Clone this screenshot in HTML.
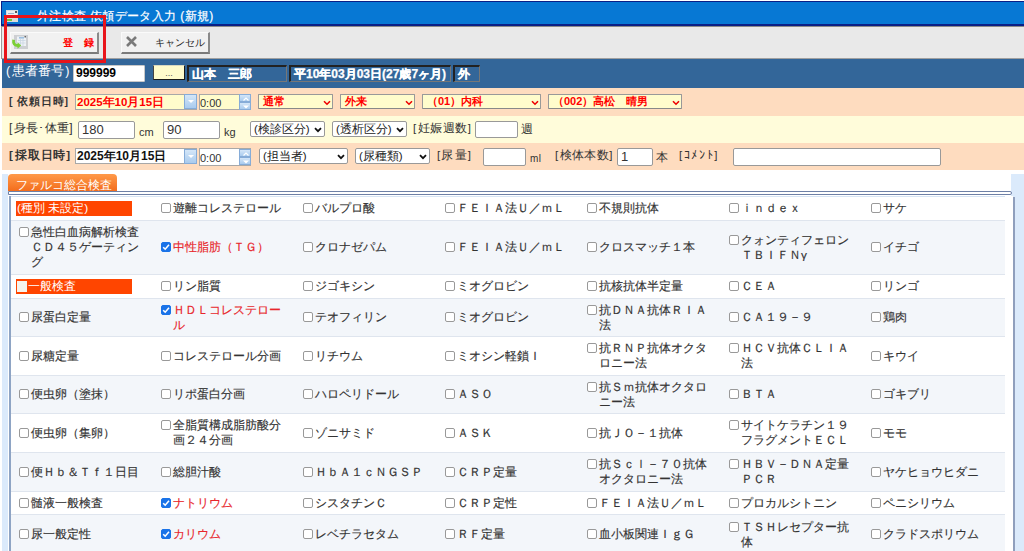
<!DOCTYPE html>
<html><head><meta charset="utf-8">
<style>
*{box-sizing:border-box}
html,body{margin:0;padding:0;width:1024px;height:551px;overflow:hidden;background:#fff;font-family:"Liberation Sans",sans-serif;color:#333}
.abs{position:absolute}
#title{left:1px;top:1px;width:1023px;height:25px;background:#0778d4;border:1px solid #0a1f86;border-right:none;border-bottom-width:2px}
#titletxt{left:37px;top:9px;font-size:12px;-webkit-text-stroke:0.2px #fff;line-height:15px;color:#fff;white-space:nowrap;letter-spacing:0.35px}
#toolbar{left:1px;top:26px;width:1023px;height:33px;background:#e9e9e9;border-left:1px solid #9a9a9a;border-top:1px solid #8a8a8a;border-bottom:1px solid #a0a0a0}
.btn{height:22px;top:32px;background:#f1f1f1;border:1px solid #fafafa;border-right:2px solid #8a8a8a;border-bottom:2px solid #7a7a7a}
#pt{left:2px;top:59px;width:1022px;height:29px;background:#336699}
.pbox{height:17px;border:1px solid #222;border-top-width:2px;border-left-width:2px;border-right-color:#777;border-bottom-color:#777;color:#fff;font-weight:bold;font-size:12px;line-height:14px;white-space:nowrap;overflow:hidden;-webkit-text-stroke:0.25px #fff}
#r1{left:2px;top:88px;width:1022px;height:28px;background:#fedcbf}
#r2{left:2px;top:116px;width:1022px;height:27px;background:#fffcda}
#r3{left:2px;top:143px;width:1022px;height:27px;background:#fedcbf}
.lbl{font-size:13px;white-space:nowrap}
.inp{background:#fff;border:1px solid #999;border-radius:2px;font-size:13px;padding-left:3px;white-space:nowrap;overflow:hidden}
.sel{background:#fffccc;border:1px solid #999;border-bottom-color:#888;border-radius:1px;font-size:11px;line-height:13px;padding-left:4px;white-space:nowrap;color:#f00;font-weight:bold}
.sel2{background:#fff;border:1px solid #999;border-radius:2px;font-size:11.5px;line-height:14px;padding-left:3px;white-space:nowrap;color:#222}
.dt{border:1px solid #a8a8a8;font-size:12px;line-height:15px;padding-left:1px;white-space:nowrap;overflow:hidden}
.spin{background:linear-gradient(#d4e6f8,#a9cbee);border:1px solid #86acd8}
#redbox{left:4px;top:15px;width:102px;height:48px;border:3px solid #e8141a}
#leftcol{left:2px;top:174px;width:6px;height:377px;background:#dbeafb}
#rightcol{left:1011px;top:174px;width:13px;height:377px;background:#dbeafb}
#tab{left:8px;top:174px;width:109px;height:17px;background:linear-gradient(#ff9a4a,#f36d1c);border-radius:4px 4px 0 0;color:#fff;font-size:12px;padding-left:8px;line-height:22px;white-space:nowrap;overflow:hidden}
#tabline{left:8px;top:191px;width:1004px;height:4px;border:1px solid #6e80a6;border-radius:0 2px 2px 0;background:#fff}
#panelL{left:9px;top:196px;width:2px;height:355px;background:#8ea4c4}
#panelR{left:1013px;top:197px;width:2px;height:354px;background:#8f9fbd}
#panelW{left:1004px;top:196px;width:9px;height:355px;background:#fff}
#grid{left:11px;top:196px;width:994px;border-collapse:collapse;table-layout:fixed}
#grid td{font-size:11.8px;line-height:14.8px;vertical-align:middle;padding:0 4px 0 4px;border-top:1px solid #dfe5ee;color:#333;-webkit-text-stroke:0.15px #333}
#grid tr:first-child td{border-top:1.5px solid #d6e4f4}
#grid tr:nth-child(even) td{background:#f3f6fa}
.cb{display:flex;align-items:flex-start;max-height:30px;overflow:hidden}
#grid tr:nth-child(2) .cb{max-height:45px}
#grid tr:nth-child(1) .cb,#grid tr:nth-child(3) .cb,#grid tr:nth-child(9) .cb{max-height:16px}
.box{position:relative;flex:none;width:10px;height:10px;border:1.2px solid #999;border-radius:2px;margin:2px 2px 0 4px;background:#fff}
.box.on{background:#1a73e8;border-color:#1a73e8}
.box.on svg{position:absolute;left:0;top:0}
.red{color:#e8262b;-webkit-text-stroke:0.15px #e8262b}
.org{background:#ff4500;color:#fff;height:15px;line-height:15px;padding-left:1px;width:116px;margin-left:1px;white-space:nowrap;-webkit-text-stroke:0}
.wsq{display:inline-block;width:10px;height:11px;background:#f4f4ee;vertical-align:-2px;margin-right:1px}
</style></head><body>
<div id="title" class="abs"></div>
<svg class="abs" style="left:6px;top:10px" width="12" height="12" viewBox="0 0 12 12">
<rect x="0" y="0" width="12" height="12" fill="#d9dadc"/>
<rect x="1" y="1" width="10" height="4" fill="#eceef0"/>
<path d="M2 3.5 H8" stroke="#9bb4d0" stroke-width="1"/>
<rect x="9" y="1" width="2" height="2" fill="#555"/>
<rect x="1" y="9" width="5" height="2" fill="#74c43a"/>
</svg>
<div id="titletxt" class="abs">外注検査 依頼データ入力 (新規)</div>
<div id="toolbar" class="abs"></div>
<div class="abs btn" style="left:10px;width:89px"></div>
<svg class="abs" style="left:11px;top:34px" width="18" height="16" viewBox="0 0 18 16">
<rect x="3" y="1" width="14" height="14" fill="#cdcfd2"/>
<rect x="6" y="2.5" width="9" height="9.5" fill="#eef2f6"/>
<rect x="8" y="3" width="5" height="1.6" fill="#9ec0e0"/>
<rect x="13.5" y="2" width="1.5" height="1.5" fill="#666"/>
<path d="M7 6.5 H14.5 M7 9 H14.5 M9.5 5 V12 M12 5 V12" stroke="#c5d3e0" stroke-width="0.7"/>
<path d="M2.6 5.8 Q1.8 11.5 7 11.5" stroke="#7ccf35" stroke-width="2.8" fill="none"/>
<path d="M6.5 8.2 L10.2 11.6 L6.5 14.8 Z" fill="#7ccf35"/>
</svg>
<div class="abs" style="left:63px;top:37px;font-size:10px;line-height:12px;color:#f00;font-weight:bold;white-space:nowrap">登<span style="display:inline-block;width:10.5px"></span>録</div>
<div class="abs btn" style="left:121px;width:89px"></div>
<svg class="abs" style="left:125px;top:35px" width="13" height="13" viewBox="0 0 13 13"><path d="M2 2 L11 11 M11 2 L2 11" stroke="#7a7a7a" stroke-width="2.6" stroke-linecap="butt"/></svg>
<div class="abs" style="left:155px;top:37px;font-size:10px;line-height:12px;color:#222;white-space:nowrap">キャンセル</div>

<div id="pt" class="abs"></div>
<div class="abs lbl" style="left:6px;top:64px;color:#fff;font-size:12.5px;line-height:15px">(<span style="margin-left:2px"></span>患者番号<span style="margin-left:1px"></span>)</div>
<div class="abs" style="left:73px;top:65px;width:72px;height:17px;background:#fff;border:1px solid #c8c8c8;border-radius:1px;font-weight:bold;font-size:12px;color:#000;line-height:15px;padding-left:2px">999999</div>
<div class="abs" style="left:153px;top:65px;width:32px;height:15px;background:#fffccc;border:1px solid #1a1a1a;border-top-color:#d8d8c0;border-left-color:#444;font-size:9px;text-align:center;line-height:14px;color:#555">...</div>
<div class="abs pbox" style="left:187px;top:65px;width:100px;padding-left:3px">山本　三郎</div>
<div class="abs pbox" style="left:289px;top:65px;width:162px;padding-left:3px">平10年03月03日(27歳7ヶ月)</div>
<div class="abs pbox" style="left:453px;top:65px;width:27px;padding-left:3px">外</div>

<div id="r1" class="abs"></div>
<div class="abs lbl" style="left:9px;top:94px;font-weight:bold;color:#333;font-size:10.5px;letter-spacing:1px;line-height:15px">[<span style="margin-left:3px"></span>依頼日時]</div>
<div class="abs dt" style="left:75px;top:94px;width:122px;height:16px;background:#fffccc;color:#f00;font-weight:bold;font-size:11.5px">2025年10月15日</div>
<div class="abs spin" style="left:184px;top:94px;width:13px;height:15px"><svg class="abs" style="left:3px;top:5px" width="6" height="4" viewBox="0 0 6 4"><path d="M0 0 L6 0 L3 3 Z" fill="#fff"/></svg></div>
<div class="abs dt" style="left:199px;top:94px;width:52px;height:16px;background:#fffccc;font-weight:normal;font-size:11px;color:#333;line-height:16px;padding-left:0">0:00</div>
<div class="abs spin" style="left:239px;top:94px;width:12px;height:8px"><svg class="abs" style="left:2.5px;top:2px" width="6" height="4" viewBox="0 0 6 4"><path d="M0.5 3.5 L3 1 L5.5 3.5" stroke="#fff" stroke-width="1.2" fill="none"/></svg></div><div class="abs spin" style="left:239px;top:102px;width:12px;height:8px"><svg class="abs" style="left:2.5px;top:2px" width="6" height="4" viewBox="0 0 6 4"><path d="M0 0.5 L6 0.5 L3 3.5 Z" fill="#fff"/></svg></div>
<div class="abs sel" style="left:258px;top:94px;width:75px;height:15px">通常<svg class="abs" style="right:1.5px;top:4.5px" width="8" height="6" viewBox="0 0 8 6"><path d="M1 1.2 L4 4.2 L7 1.2" stroke="#e00" stroke-width="1.6" fill="none"/></svg></div>
<div class="abs sel" style="left:340px;top:94px;width:75px;height:15px">外来<svg class="abs" style="right:1.5px;top:4.5px" width="8" height="6" viewBox="0 0 8 6"><path d="M1 1.2 L4 4.2 L7 1.2" stroke="#e00" stroke-width="1.6" fill="none"/></svg></div>
<div class="abs sel" style="left:422px;top:94px;width:119px;height:15px">（01）内科<svg class="abs" style="right:1.5px;top:4.5px" width="8" height="6" viewBox="0 0 8 6"><path d="M1 1.2 L4 4.2 L7 1.2" stroke="#e00" stroke-width="1.6" fill="none"/></svg></div>
<div class="abs sel" style="left:548px;top:94px;width:134px;height:15px">（002）高松　晴男<svg class="abs" style="right:1.5px;top:4.5px" width="8" height="6" viewBox="0 0 8 6"><path d="M1 1.2 L4 4.2 L7 1.2" stroke="#e00" stroke-width="1.6" fill="none"/></svg></div>

<div id="r2" class="abs"></div>
<div class="abs lbl" style="left:9px;top:121px;font-size:12px;line-height:15px;color:#333;letter-spacing:0.3px">[<span style="margin-left:1px"></span>身長･体重]</div>
<div class="abs inp" style="left:78px;top:121px;width:57px;height:18px;line-height:16px">180</div>
<div class="abs lbl" style="left:139px;top:125px;font-size:11px;line-height:14px">cm</div>
<div class="abs inp" style="left:163px;top:121px;width:57px;height:18px;line-height:16px">90</div>
<div class="abs lbl" style="left:224px;top:125px;font-size:11px;line-height:14px">kg</div>
<div class="abs sel2" style="left:250px;top:121px;width:75px;height:16px">(検診区分)<svg class="abs" style="right:2px;top:5px" width="8" height="6" viewBox="0 0 8 6"><path d="M1 1.2 L4 4.2 L7 1.2" stroke="#111" stroke-width="1.8" fill="none"/></svg></div>
<div class="abs sel2" style="left:332px;top:121px;width:75px;height:16px">(透析区分)<svg class="abs" style="right:2px;top:5px" width="8" height="6" viewBox="0 0 8 6"><path d="M1 1.2 L4 4.2 L7 1.2" stroke="#111" stroke-width="1.8" fill="none"/></svg></div>
<div class="abs lbl" style="left:413px;top:121px;font-size:11.5px;line-height:15px;letter-spacing:0.5px">[<span style="margin-left:1px"></span>妊娠週数]</div>
<div class="abs inp" style="left:475px;top:121px;width:43px;height:17px"></div>
<div class="abs lbl" style="left:521px;top:122px;font-size:12px;line-height:15px">週</div>

<div id="r3" class="abs"></div>
<div class="abs lbl" style="left:9px;top:148px;font-weight:bold;font-size:11.5px;line-height:15px;color:#333;letter-spacing:0.9px">[<span style="margin-left:1px"></span>採取日時]</div>
<div class="abs dt" style="left:75px;top:148px;width:122px;height:16px;background:#fff;color:#111;font-weight:bold">2025年10月15日</div>
<div class="abs spin" style="left:184px;top:149px;width:13px;height:15px"><svg class="abs" style="left:3px;top:5px" width="6" height="4" viewBox="0 0 6 4"><path d="M0 0 L6 0 L3 3 Z" fill="#fff"/></svg></div>
<div class="abs dt" style="left:199px;top:148px;width:52px;height:18px;background:#fff;font-weight:normal;font-size:11px;color:#333;line-height:19px;padding-left:0">0:00</div>
<div class="abs spin" style="left:239px;top:149px;width:12px;height:8px"><svg class="abs" style="left:2.5px;top:2px" width="6" height="4" viewBox="0 0 6 4"><path d="M0.5 3.5 L3 1 L5.5 3.5" stroke="#fff" stroke-width="1.2" fill="none"/></svg></div><div class="abs spin" style="left:239px;top:157px;width:12px;height:8px"><svg class="abs" style="left:2.5px;top:2px" width="6" height="4" viewBox="0 0 6 4"><path d="M0 0.5 L6 0.5 L3 3.5 Z" fill="#fff"/></svg></div>
<div class="abs sel2" style="left:259px;top:148px;width:89px;height:16px">(担当者)<svg class="abs" style="right:2px;top:5px" width="8" height="6" viewBox="0 0 8 6"><path d="M1 1.2 L4 4.2 L7 1.2" stroke="#111" stroke-width="1.8" fill="none"/></svg></div>
<div class="abs sel2" style="left:355px;top:148px;width:75px;height:16px">(尿種類)<svg class="abs" style="right:2px;top:5px" width="8" height="6" viewBox="0 0 8 6"><path d="M1 1.2 L4 4.2 L7 1.2" stroke="#111" stroke-width="1.8" fill="none"/></svg></div>
<div class="abs lbl" style="left:437px;top:148px;font-size:11.5px;line-height:15px;letter-spacing:1.2px">[尿量]</div>
<div class="abs inp" style="left:483px;top:148px;width:43px;height:18px"></div>
<div class="abs lbl" style="left:530px;top:152px;font-size:10px;line-height:14px;letter-spacing:0.5px">ml</div>
<div class="abs lbl" style="left:555px;top:148px;font-size:11.5px;line-height:15px;letter-spacing:0.4px">[<span style="margin-left:1px"></span>検体本数]</div>
<div class="abs inp" style="left:617px;top:148px;width:36px;height:18px;line-height:16px">1</div>
<div class="abs lbl" style="left:656px;top:149.5px;font-size:12px;line-height:15px">本</div>
<div class="abs lbl" style="left:679px;top:148px;font-size:11.5px;line-height:15px;letter-spacing:1.6px">[ｺﾒﾝﾄ]</div>
<div class="abs inp" style="left:733px;top:148px;width:208px;height:18px"></div>

<div id="redbox" class="abs"></div>

<div id="leftcol" class="abs"></div>
<div id="rightcol" class="abs"></div>
<div id="tab" class="abs">ファルコ総合検査</div>
<div id="tabline" class="abs"></div>
<div id="panelL" class="abs"></div>
<div id="panelW" class="abs"></div>
<div id="panelR" class="abs"></div>

<table id="grid" class="abs">
<colgroup><col><col><col><col><col><col><col></colgroup>
<tr style="height:24px">
<td><div class="org">(種別 未設定)</div></td>
<td><div class="cb"><span class="box"></span><span>遊離コレステロール</span></div></td>
<td><div class="cb"><span class="box"></span><span>バルプロ酸</span></div></td>
<td><div class="cb"><span class="box"></span><span>ＦＥＩＡ法Ｕ／ｍＬ</span></div></td>
<td><div class="cb"><span class="box"></span><span>不規則抗体</span></div></td>
<td><div class="cb"><span class="box"></span><span>ｉｎｄｅｘ</span></div></td>
<td><div class="cb"><span class="box"></span><span>サケ</span></div></td>
</tr>
<tr style="height:54px">
<td><div class="cb"><span class="box"></span><span>急性白血病解析検査ＣＤ４５ゲーティング</span></div></td>
<td><div class="cb"><span class="box on"><svg width="8" height="8" viewBox="0 0 8 8"><path d="M1.2 4.2 L3.2 6.2 L7 1.8" stroke="#fff" stroke-width="1.6" fill="none"/></svg></span><span class="red">中性脂肪（ＴＧ）</span></div></td>
<td><div class="cb"><span class="box"></span><span>クロナゼパム</span></div></td>
<td><div class="cb"><span class="box"></span><span>ＦＥＩＡ法Ｕ／ｍＬ</span></div></td>
<td><div class="cb"><span class="box"></span><span>クロスマッチ１本</span></div></td>
<td><div class="cb"><span class="box"></span><span>クォンティフェロンＴＢＩＦＮγ</span></div></td>
<td><div class="cb"><span class="box"></span><span>イチゴ</span></div></td>
</tr>
<tr style="height:24px">
<td><div class="org"><span class="wsq"></span>一般検査</div></td>
<td><div class="cb"><span class="box"></span><span>リン脂質</span></div></td>
<td><div class="cb"><span class="box"></span><span>ジゴキシン</span></div></td>
<td><div class="cb"><span class="box"></span><span>ミオグロビン</span></div></td>
<td><div class="cb"><span class="box"></span><span>抗核抗体半定量</span></div></td>
<td><div class="cb"><span class="box"></span><span>ＣＥＡ</span></div></td>
<td><div class="cb"><span class="box"></span><span>リンゴ</span></div></td>
</tr>
<tr style="height:38px">
<td><div class="cb"><span class="box"></span><span>尿蛋白定量</span></div></td>
<td><div class="cb"><span class="box on"><svg width="8" height="8" viewBox="0 0 8 8"><path d="M1.2 4.2 L3.2 6.2 L7 1.8" stroke="#fff" stroke-width="1.6" fill="none"/></svg></span><span class="red">ＨＤＬコレステロール</span></div></td>
<td><div class="cb"><span class="box"></span><span>テオフィリン</span></div></td>
<td><div class="cb"><span class="box"></span><span>ミオグロビン</span></div></td>
<td><div class="cb"><span class="box"></span><span>抗ＤＮＡ抗体ＲＩＡ法</span></div></td>
<td><div class="cb"><span class="box"></span><span>ＣＡ１９－９</span></div></td>
<td><div class="cb"><span class="box"></span><span>鶏肉</span></div></td>
</tr>
<tr style="height:39px">
<td><div class="cb"><span class="box"></span><span>尿糖定量</span></div></td>
<td><div class="cb"><span class="box"></span><span>コレステロール分画</span></div></td>
<td><div class="cb"><span class="box"></span><span>リチウム</span></div></td>
<td><div class="cb"><span class="box"></span><span>ミオシン軽鎖Ｉ</span></div></td>
<td><div class="cb"><span class="box"></span><span>抗ＲＮＰ抗体オクタロニー法</span></div></td>
<td><div class="cb"><span class="box"></span><span>ＨＣＶ抗体ＣＬＩＡ法</span></div></td>
<td><div class="cb"><span class="box"></span><span>キウイ</span></div></td>
</tr>
<tr style="height:38px">
<td><div class="cb"><span class="box"></span><span>便虫卵（塗抹）</span></div></td>
<td><div class="cb"><span class="box"></span><span>リポ蛋白分画</span></div></td>
<td><div class="cb"><span class="box"></span><span>ハロペリドール</span></div></td>
<td><div class="cb"><span class="box"></span><span>ＡＳＯ</span></div></td>
<td><div class="cb"><span class="box"></span><span>抗Ｓｍ抗体オクタロニー法</span></div></td>
<td><div class="cb"><span class="box"></span><span>ＢＴＡ</span></div></td>
<td><div class="cb"><span class="box"></span><span>ゴキブリ</span></div></td>
</tr>
<tr style="height:39px">
<td><div class="cb"><span class="box"></span><span>便虫卵（集卵）</span></div></td>
<td><div class="cb"><span class="box"></span><span>全脂質構成脂肪酸分画２４分画</span></div></td>
<td><div class="cb"><span class="box"></span><span>ゾニサミド</span></div></td>
<td><div class="cb"><span class="box"></span><span>ＡＳＫ</span></div></td>
<td><div class="cb"><span class="box"></span><span>抗ＪＯ－１抗体</span></div></td>
<td><div class="cb"><span class="box"></span><span>サイトケラチン１９フラグメントＥＣＬ</span></div></td>
<td><div class="cb"><span class="box"></span><span>モモ</span></div></td>
</tr>
<tr style="height:39px">
<td><div class="cb"><span class="box"></span><span>便Ｈｂ＆Ｔｆ１日目</span></div></td>
<td><div class="cb"><span class="box"></span><span>総胆汁酸</span></div></td>
<td><div class="cb"><span class="box"></span><span>ＨｂＡ１ｃＮＧＳＰ</span></div></td>
<td><div class="cb"><span class="box"></span><span>ＣＲＰ定量</span></div></td>
<td><div class="cb"><span class="box"></span><span>抗Ｓｃｌ－７０抗体オクタロニー法</span></div></td>
<td><div class="cb"><span class="box"></span><span>ＨＢＶ－ＤＮＡ定量ＰＣＲ</span></div></td>
<td><div class="cb"><span class="box"></span><span>ヤケヒョウヒダニ</span></div></td>
</tr>
<tr style="height:23px">
<td><div class="cb"><span class="box"></span><span>髄液一般検査</span></div></td>
<td><div class="cb"><span class="box on"><svg width="8" height="8" viewBox="0 0 8 8"><path d="M1.2 4.2 L3.2 6.2 L7 1.8" stroke="#fff" stroke-width="1.6" fill="none"/></svg></span><span class="red">ナトリウム</span></div></td>
<td><div class="cb"><span class="box"></span><span>シスタチンＣ</span></div></td>
<td><div class="cb"><span class="box"></span><span>ＣＲＰ定性</span></div></td>
<td><div class="cb"><span class="box"></span><span>ＦＥＩＡ法Ｕ／ｍＬ</span></div></td>
<td><div class="cb"><span class="box"></span><span>プロカルシトニン</span></div></td>
<td><div class="cb"><span class="box"></span><span>ペニシリウム</span></div></td>
</tr>
<tr style="height:40px">
<td><div class="cb"><span class="box"></span><span>尿一般定性</span></div></td>
<td><div class="cb"><span class="box on"><svg width="8" height="8" viewBox="0 0 8 8"><path d="M1.2 4.2 L3.2 6.2 L7 1.8" stroke="#fff" stroke-width="1.6" fill="none"/></svg></span><span class="red">カリウム</span></div></td>
<td><div class="cb"><span class="box"></span><span>レベチラセタム</span></div></td>
<td><div class="cb"><span class="box"></span><span>ＲＦ定量</span></div></td>
<td><div class="cb"><span class="box"></span><span>血小板関連ＩｇＧ</span></div></td>
<td><div class="cb"><span class="box"></span><span>ＴＳＨレセプター抗体</span></div></td>
<td><div class="cb"><span class="box"></span><span>クラドスポリウム</span></div></td>
</tr>
</table>
</body></html>
